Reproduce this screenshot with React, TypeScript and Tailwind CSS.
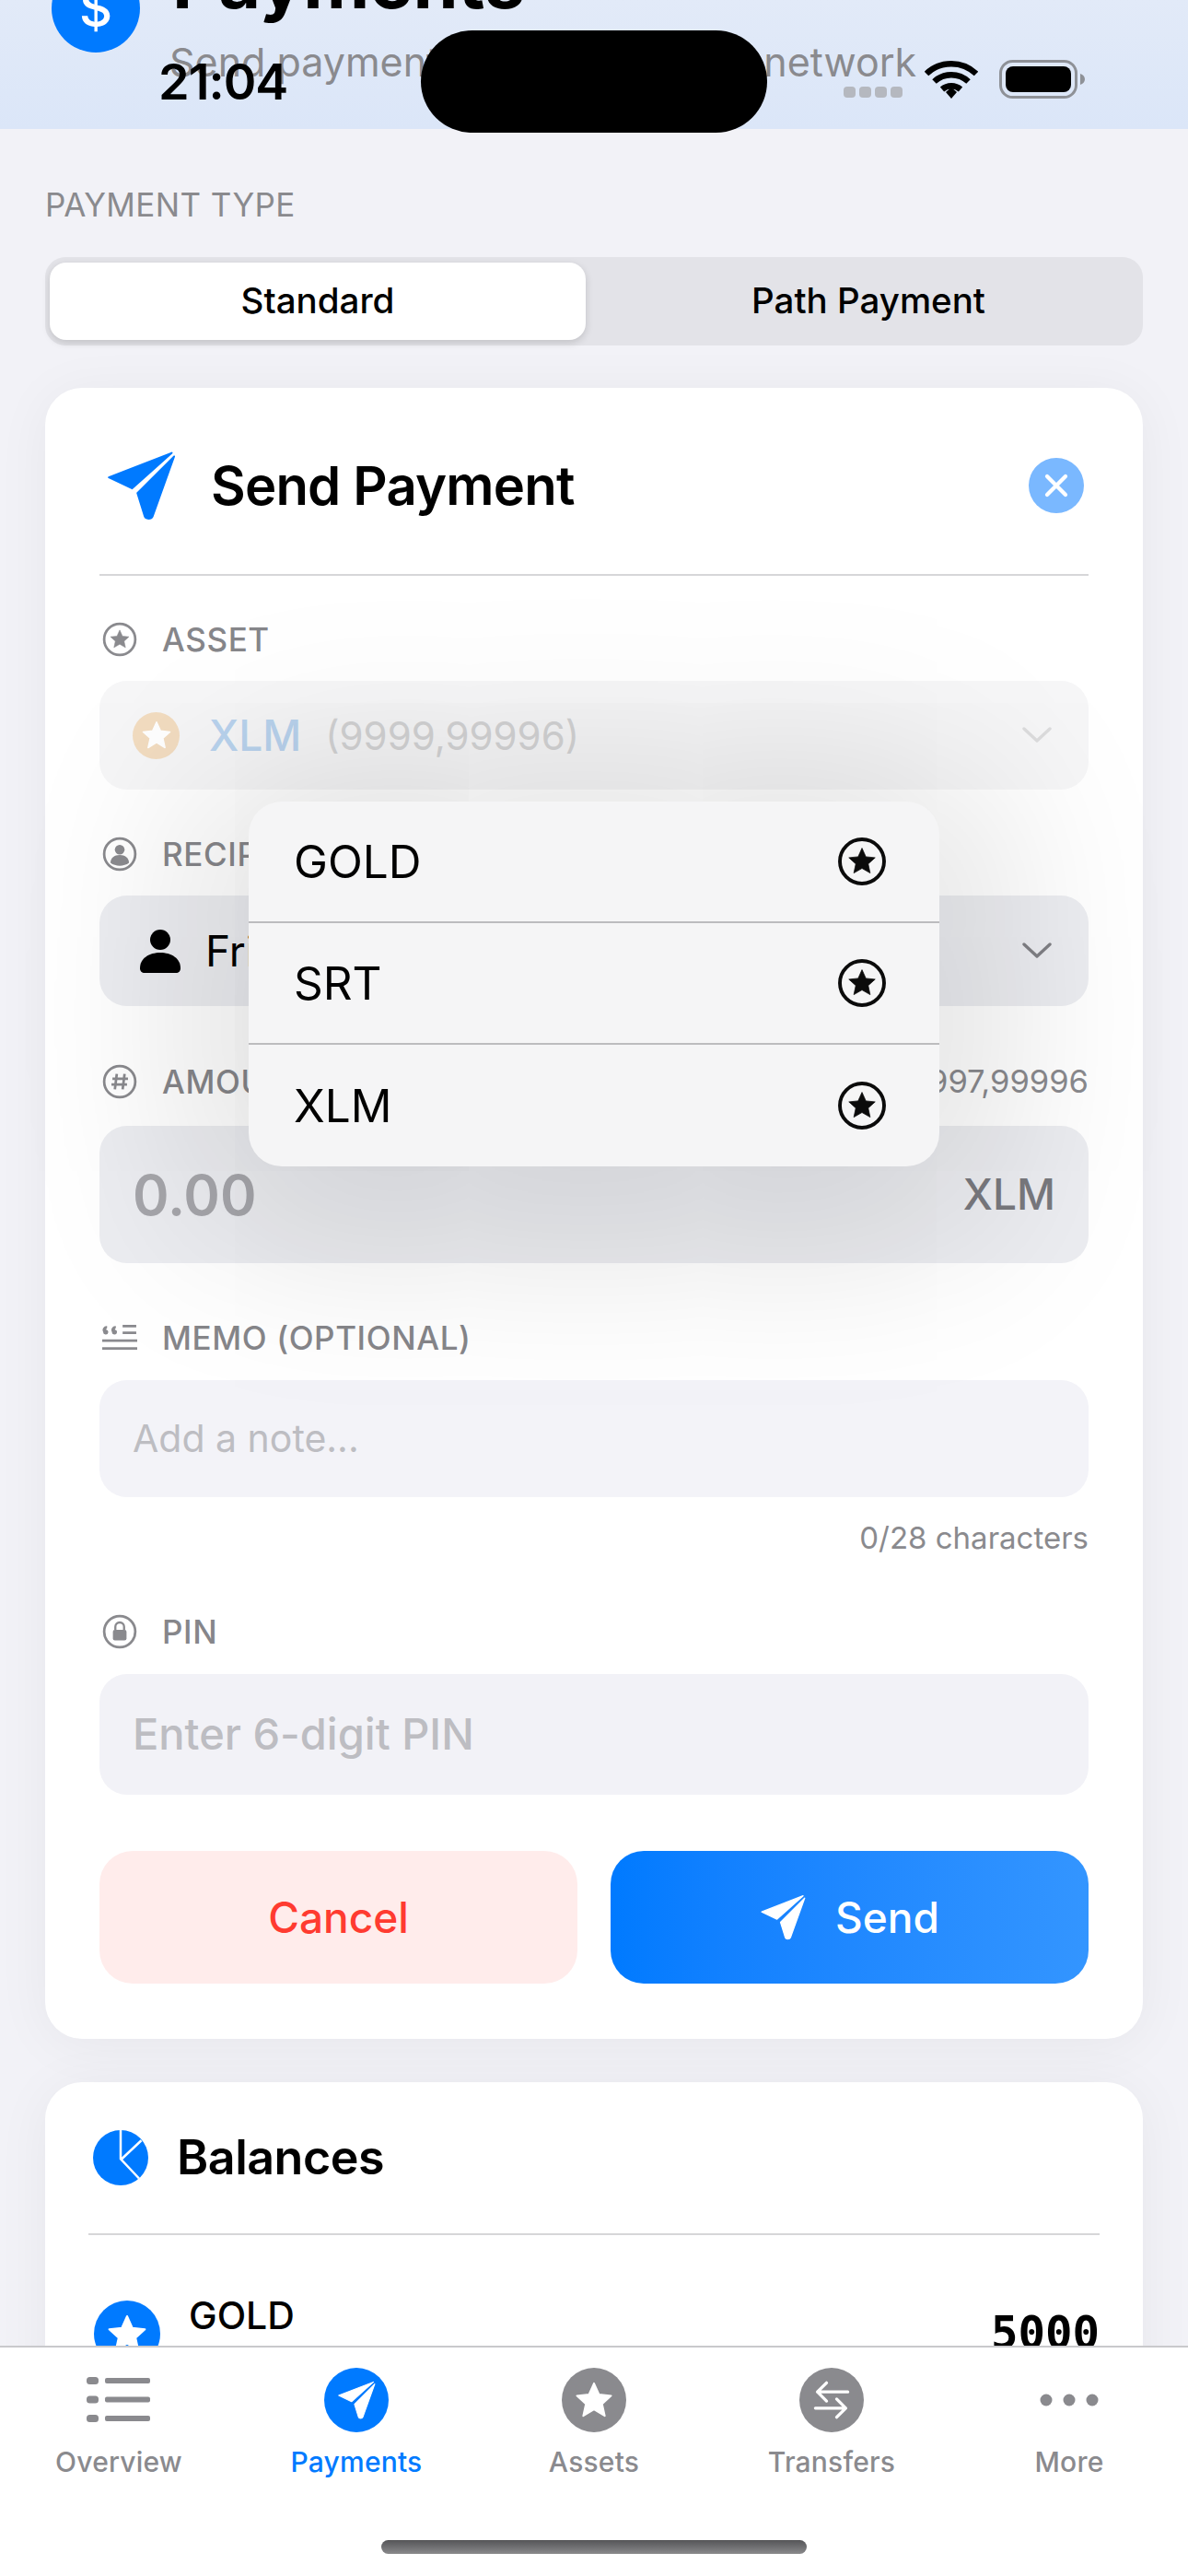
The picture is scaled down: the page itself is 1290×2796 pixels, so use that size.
const GRAY = "#8a8a8e";

const Star = ({ fill = "white", className = "" }: { fill?: string; className?: string }) => (
  <svg viewBox="0 0 24 24" className={className}>
    <path
      d="M12 2.5l2.9 6.4 6.8.7-5.1 4.6 1.5 6.8L12 17.3l-6.1 3.7 1.5-6.8L2.3 9.6l6.8-.7z"
      fill={fill}
      stroke={fill}
      strokeWidth="1"
      strokeLinejoin="round"
    />
  </svg>
);

const Plane = ({ fill = "white", className = "" }: { fill?: string; className?: string }) => (
  <svg viewBox="0 0 24 24" className={className}>
    <g fill={fill} stroke={fill} strokeWidth="0.6" strokeLinejoin="round">
      <path d="M1 9.2 22.6.8 9 13z" />
      <path d="M23.4 2 16 22.6c-.4 1-2.4 1-2.7 0L10.8 14.6z" />
    </g>
  </svg>
);

const StarCircle = ({ color, className }: { color: string; className: string }) => (
  <svg viewBox="0 0 36 36" className={className}>
    <circle cx="18" cy="18" r="16" fill="none" stroke={color} strokeWidth="2.6" />
    <path
      d="M18 8.4l2.800 6.200 6.700.7-5 4.500 1.400 6.600-5.900-3.400-5.900 3.400 1.400-6.600-5-4.500 6.700-.7z"
      fill={color}
      stroke={color}
      strokeWidth="0.5"
      strokeLinejoin="round"
    />
  </svg>
);

const PersonCircle = ({ className }: { className: string }) => (
  <svg viewBox="0 0 36 36" className={className}>
    <circle cx="18" cy="18" r="16" fill="none" stroke={GRAY} strokeWidth="2.6" />
    <circle cx="18" cy="13.5" r="5" fill={GRAY} />
    <path d="M8.5 27c0-5 4-8 9.5-8s9.5 3 9.5 8c-2.5 2-6 3-9.500 3s-7-1-9.500-3z" fill={GRAY} />
  </svg>
);

const HashCircle = ({ className }: { className: string }) => (
  <svg viewBox="0 0 36 36" className={className}>
    <circle cx="18" cy="18" r="16" fill="none" stroke={GRAY} strokeWidth="2.6" />
    <path d="M15 10l-2 16M23 10l-2 16M10.500 15h16M9.500 21h16" stroke={GRAY} strokeWidth="2.6" fill="none" />
  </svg>
);

const LockCircle = ({ className }: { className: string }) => (
  <svg viewBox="0 0 36 36" className={className}>
    <circle cx="18" cy="18" r="16" fill="none" stroke={GRAY} strokeWidth="2.6" />
    <path d="M13.500 16v-3a4.500 4.500 0 0 1 9 0v3" fill="none" stroke={GRAY} strokeWidth="2.2" />
    <rect x="11" y="16" width="14" height="11" rx="2" fill={GRAY} />
  </svg>
);

const QuoteLines = ({ className }: { className: string }) => (
  <svg viewBox="0 0 36 30" className={className}>
    <path d="M1 9a4 4 0 0 1 4-6v2a2 2 0 0 0-1 1.600A2.600 2.600 0 1 1 1 9zM10 9a4 4 0 0 1 4-6v2a2 2 0 0 0-1 1.600A2.600 2.600 0 1 1 10 9z" fill={GRAY} />
    <path d="M21 3h14M21 10h14M0 18h36M0 26h36" stroke={GRAY} strokeWidth="2.6" fill="none" />
  </svg>
);

const Chevron = ({ color }: { color: string }) => (
  <svg viewBox="0 0 32 18" className="h-[18px] w-[32px]">
    <path d="M2 2l14 13L30 2" fill="none" stroke={color} strokeWidth="3.400" strokeLinecap="round" strokeLinejoin="round" />
  </svg>
);

function FieldLabel({ icon, text, className }: { icon: React.ReactNode; text: string; className: string }) {
  return (
    <div className={`flex h-10 items-center ${className}`}>
      <div className="ml-[3px] flex w-[40px] justify-start">{icon}</div>
      <span className="ml-[25px] text-[35px] font-medium tracking-[0.6px] whitespace-nowrap text-[#86868a]">{text}</span>
    </div>
  );
}

const tabs = [
  {
    label: "Overview",
    icon: (
      <svg viewBox="0 0 70 50" className="h-[50px] w-[70px]">
        <g fill={GRAY}>
          <rect x="0" y="0" width="13" height="8" rx="3.500" />
          <rect x="0" y="20.500" width="13" height="8" rx="3.500" />
          <rect x="0" y="41" width="13" height="8" rx="3.500" />
          <rect x="20" y="1" width="49" height="6" rx="2" />
          <rect x="20" y="21.500" width="49" height="6" rx="2" />
          <rect x="20" y="42" width="49" height="6" rx="2" />
        </g>
      </svg>
    ),
  },
  {
    label: "Payments",
    active: true,
    icon: (
      <div className="flex h-[70px] w-[70px] items-center justify-center rounded-full bg-[#007aff]">
        <Plane className="h-[42px] w-[42px]" />
      </div>
    ),
  },
  {
    label: "Assets",
    icon: (
      <div className="flex h-[70px] w-[70px] items-center justify-center rounded-full bg-[#8a8a8e]">
        <Star className="h-[46px] w-[46px]" />
      </div>
    ),
  },
  {
    label: "Transfers",
    icon: (
      <div className="flex h-[70px] w-[70px] items-center justify-center rounded-full bg-[#8a8a8e]">
        <svg viewBox="0 0 40 40" className="h-[44px] w-[44px]">
          <path d="M36 12H6M15 3l-9 9 9 9M4 28h30M25 19l9 9-9 9" fill="none" stroke="white" strokeWidth="3" strokeLinecap="round" strokeLinejoin="round" />
        </svg>
      </div>
    ),
  },
  {
    label: "More",
    icon: (
      <svg viewBox="0 0 64 14" className="h-[14px] w-[64px]">
        <g fill={GRAY}>
          <circle cx="7" cy="7" r="6.500" />
          <circle cx="32" cy="7" r="6.500" />
          <circle cx="57" cy="7" r="6.500" />
        </g>
      </svg>
    ),
  },
];

export default function App() {
  return (
    <div
      className="relative flex h-[2796px] w-[1290px] flex-col overflow-hidden bg-[#f2f2f7] text-black"
      style={{ fontFamily: 'Inter, "Liberation Sans", sans-serif' }}
    >
      {/* header, scrolled under the status bar */}
      <header className="relative flex h-[140px] shrink-0 flex-col justify-end overflow-hidden bg-gradient-to-b from-[#e2eaf8] to-[#dbe6f8] px-[56px]">
        <div className="flex items-start">
          <div className="-mt-[21px] flex h-[96px] w-[96px] shrink-0 items-center justify-center rounded-full bg-[#007aff] text-[56px] font-medium text-white">
            $
          </div>
          <div className="ml-[35px] -mt-[6px]">
            <div className="h-[66px] text-[79px] leading-[8px] font-bold whitespace-nowrap">Payments</div>
            <div className="-ml-[3px] text-[43px] leading-[50px] whitespace-nowrap text-[#8a8a8e]">
              Send payments over the Stellar network
            </div>
          </div>
        </div>
        <div className="h-[48px] shrink-0" />
      </header>

      {/* status bar */}
      <div className="absolute top-[33px] left-[457px] h-[111px] w-[376px] rounded-[56px] bg-black" />
      <div className="absolute top-[59px] left-[172px] text-[54px] leading-[60px] font-semibold tracking-[-1px]">21:04</div>
      <div className="absolute top-[65px] left-[916px] flex items-end">
        <div className="mb-[1px] flex gap-[4px]">
          <span className="h-[12px] w-[13px] rounded-[4px] bg-[#b5b8bf]" />
          <span className="h-[12px] w-[13px] rounded-[4px] bg-[#b5b8bf]" />
          <span className="h-[12px] w-[13px] rounded-[4px] bg-[#b5b8bf]" />
          <span className="h-[12px] w-[13px] rounded-[4px] bg-[#b5b8bf]" />
        </div>
        <svg viewBox="0 0 58 42" className="ml-[24px] h-[42px] w-[58px]">
          <path d="M2 15a39 39 0 0 1 54 0M10.500 23.500a27 27 0 0 1 37 0M19 32a15 15 0 0 1 20 0" fill="none" stroke="black" strokeWidth="6.500" />
          <path d="M23 35l6-5 6 5-6 7z" fill="black" />
        </svg>
        <svg viewBox="0 0 94 42" className="ml-[23px] h-[42px] w-[94px]">
          <rect x="1.500" y="1.500" width="82" height="39" rx="13" fill="none" stroke="#8e9197" strokeWidth="3" />
          <rect x="7" y="7" width="71" height="28" rx="8" fill="black" />
          <path d="M88 15c3 1 5 3 5 6s-2 5-5 6z" fill="#8e9197" />
        </svg>
      </div>

      <main className="min-h-0 flex-1 overflow-hidden px-[49px]">
        <p className="mt-[62px] h-10 text-[35px] leading-10 tracking-[0.4px] text-[#8a8a8e]">PAYMENT TYPE</p>

        <div className="mt-[37px] flex h-[96px] items-center rounded-[22px] bg-[#e3e3e8] px-[5px] text-[38.500px] font-medium">
          <div className="flex h-[84px] w-[582px] items-center justify-center rounded-[18px] bg-white shadow-[0_3px_8px_rgba(0,0,0,0.15)]">
            Standard
          </div>
          <div className="flex flex-1 items-center justify-center pl-[14px]">Path Payment</div>
        </div>

        <section className="mt-[46px] rounded-[40px] bg-white px-[59px] pb-[60px] shadow-[0_6px_60px_rgba(0,0,0,0.05)]">
          <div className="flex h-[204px] items-center border-b-2 border-[#d6d6d8] pt-[10px]">
            <Plane fill="#007aff" className="ml-[7px] h-[76px] w-[76px]" />
            <h2 className="ml-[38px] text-[58px] font-semibold tracking-[-0.8px]">Send Payment</h2>
            <div className="mr-[5px] ml-auto flex h-[60px] w-[60px] items-center justify-center rounded-full bg-[#7ab8ff]">
              <svg viewBox="0 0 24 24" className="h-[30px] w-[30px]">
                <path d="M4 4l16 16M20 4L4 20" stroke="white" strokeWidth="3.400" strokeLinecap="round" />
              </svg>
            </div>
          </div>

          <FieldLabel icon={<StarCircle color={GRAY} className="h-[38px] w-[38px]" />} text="ASSET" className="mt-[49px]" />
          <div className="mt-[25px] flex h-[118px] items-center rounded-[30px] bg-[#f6f6f7] px-[36px]">
            <div className="flex h-[51px] w-[51px] items-center justify-center rounded-full bg-[#f2dcc0]">
              <Star className="h-[36px] w-[36px]" />
            </div>
            <span className="ml-[32px] text-[46px] font-medium text-[#b9d3ee]">XLM</span>
            <span className="ml-[26px] text-[42px] text-[#d3d3d4]">(9999,99996)</span>
            <span className="mr-[4px] ml-auto"><Chevron color="#dcdcdd" /></span>
          </div>

          <FieldLabel icon={<PersonCircle className="h-[38px] w-[38px]" />} text="RECIPIENT" className="mt-[50px]" />
          <div className="mt-[25px] flex h-[120px] items-center rounded-[30px] bg-[#ecedf1] px-[44px]">
            <svg viewBox="0 0 44 50" className="h-[50px] w-[44px]">
              <circle cx="22" cy="13" r="11" fill="black" />
              <path d="M0 44c0-11 10-17 22-17s22 6 22 17c0 3-2 5-5 5H5c-3 0-5-2-5-5z" fill="black" />
            </svg>
            <span className="ml-[27px] text-[46px]">Friend</span>
            <span className="mr-[-4px] ml-auto"><Chevron color="#808085" /></span>
          </div>

          <div className="mt-[62px] flex items-center justify-between">
            <FieldLabel icon={<HashCircle className="h-[38px] w-[38px]" />} text="AMOUNT" className="" />
            <span className="text-[34.500px] leading-10 text-[#8a8a8e]">Available: 9997,99996</span>
          </div>
          <div className="mt-[28px] flex h-[149px] items-center justify-between rounded-[30px] bg-[#ecedf1] px-[36px]">
            <span className="text-[60px] font-semibold text-[#a6a6ab]">0.00</span>
            <span className="text-[46px] font-medium text-[#79797e]">XLM</span>
          </div>

          <FieldLabel icon={<QuoteLines className="h-[32px] w-[38px]" />} text="MEMO (OPTIONAL)" className="mt-[61px]" />
          <div className="mt-[26px] flex h-[127px] items-center rounded-[30px] bg-[#f3f3f8] px-[36px] text-[41px] text-[#bdbdc2]">
            Add a note...
          </div>
          <p className="mt-[24px] h-10 text-right text-[33px] leading-10 text-[#8a8a8e]">0/28 characters</p>

          <FieldLabel icon={<LockCircle className="h-[38px] w-[38px]" />} text="PIN" className="mt-[62px]" />
          <div className="mt-[26px] flex h-[131px] items-center rounded-[30px] bg-[#f2f2f7] px-[36px] text-[47px] font-medium text-[#bdbdc2]">
            Enter 6-digit PIN
          </div>

          <div className="mt-[61px] flex h-[144px] gap-[36px]">
            <div className="flex flex-1 items-center justify-center rounded-[36px] bg-[#ffeceb] text-[46px] font-medium text-[#ff3b30]">
              Cancel
            </div>
            <div className="flex flex-1 items-center justify-center gap-[32px] rounded-[36px] bg-gradient-to-r from-[#007aff] to-[#3395ff] text-[46px] font-medium text-white">
              <Plane className="h-[50px] w-[50px]" />
              Send
            </div>
          </div>
        </section>

        <section className="mt-[47px] rounded-[40px] bg-white px-[47px] pb-[60px] shadow-[0_6px_60px_rgba(0,0,0,0.05)]">
          <div className="flex h-[166px] items-center border-b-2 border-[#d6d6d8]">
            <svg viewBox="0 0 24 24" className="ml-[5px] h-[60px] w-[60px]">
              <circle cx="12" cy="12" r="12" fill="#007aff" />
              <path d="M12 0v12.500L20 21M12.500 12.500L21 4.500" fill="none" stroke="white" strokeWidth="1" />
            </svg>
            <h2 className="ml-[31px] text-[52px] font-semibold tracking-[-0.5px]">Balances</h2>
          </div>
          <div className="mt-[71px] flex">
            <div className="ml-[6px] flex h-[72px] w-[72px] items-center justify-center rounded-full bg-[#007aff]">
              <Star className="h-[48px] w-[48px]" />
            </div>
            <span className="ml-[31px] -mt-[14px] text-[41px] leading-[60px] font-medium">GOLD</span>
            <span
              className="mt-[11px] ml-auto text-[49px] leading-[50px] font-bold"
              style={{ fontFamily: '"DejaVu Sans Mono", monospace' }}
            >
              5000
            </span>
          </div>
        </section>
      </main>

      <nav className="flex h-[250px] shrink-0 border-t-2 border-[#c9c9cc] bg-white">
        {tabs.map((tab) => (
          <div key={tab.label} className="flex w-[258px] flex-col items-center pt-[22px]">
            <div className="flex h-[70px] items-center justify-center">{tab.icon}</div>
            <span className={`mt-[14px] text-[30px] leading-[36px] font-medium tracking-[0.2px] ${tab.active ? "text-[#007aff]" : "text-[#8a8a8e]"}`}>
              {tab.label}
            </span>
          </div>
        ))}
      </nav>
      <div className="absolute top-[2757px] left-[414px] h-[15px] w-[462px] rounded-full bg-gradient-to-b from-[#555558] to-[#8a8a8c]" />

      {/* asset picker menu */}
      <div className="absolute top-[870px] left-[270px] w-[750px] rounded-[36px] bg-[#f5f5f6] text-[49.500px] shadow-[0_20px_200px_60px_rgba(0,0,0,0.13)]">
        {["GOLD", "SRT", "XLM"].map((name, i) => (
          <div
            key={name}
            className={`flex h-[132px] items-center justify-between pr-[57px] pl-[49px] ${i < 2 ? "border-b-2 border-[#bcbcbe]" : ""}`}
          >
            {name}
            <StarCircle color="#0b0b0b" className="h-[54px] w-[54px]" />
          </div>
        ))}
      </div>
    </div>
  );
}
